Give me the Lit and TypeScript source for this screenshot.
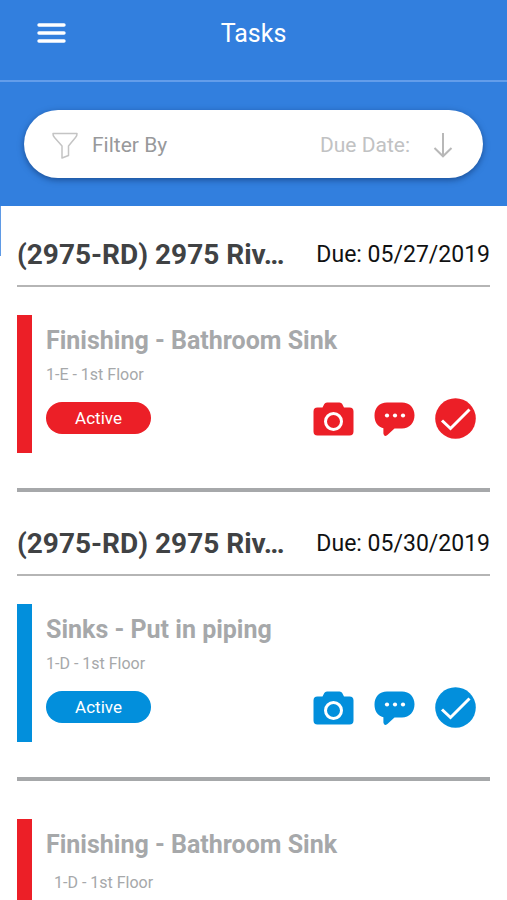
import { LitElement, html, css, svg, nothing } from "lit";
import { customElement, property } from "lit/decorators.js";
import { classMap } from "lit/directives/class-map.js";

type Tone = "red" | "blue";

interface Task {
  project?: string;
  due?: string;
  title: string;
  place: string;
  tone: Tone;
  indented?: boolean;
}

const tasks: Task[] = [
  {
    project: "(2975-RD) 2975 Riv…",
    due: "05/27/2019",
    title: "Finishing - Bathroom Sink",
    place: "1-E - 1st Floor",
    tone: "red",
  },
  {
    project: "(2975-RD) 2975 Riv…",
    due: "05/30/2019",
    title: "Sinks - Put in piping",
    place: "1-D - 1st Floor",
    tone: "blue",
  },
  {
    title: "Finishing - Bathroom Sink",
    place: "1-D - 1st Floor",
    tone: "red",
    indented: true,
  },
];

const camera = svg`
  <path fill="currentColor" d="M4.500 9.500H9.500L11.300 6.100Q12 4.500 14 4.500H26.500Q28.500 4.500 29.200 6.100L31 9.500H36.500Q40.500 9.500 40.500 13.500V33.500Q40.500 37.500 36.500 37.500H4.500Q.5 37.500 .5 33.500V13.500Q.5 9.500 4.500 9.500Z"/>
  <circle cx="20.500" cy="23.500" r="8" fill="none" stroke="#fff" stroke-width="3"/>`;

const chat = svg`
  <path fill="currentColor" d="M13 4.500H28C35.500 4.500 40.500 9.800 40.500 17.300S35.500 30.500 28 30.500H20.500L13.400 37Q10 39.500 9.400 35.500V30.200C3.500 29 .5 23.800.5 17.500.5 9.800 5.500 4.500 13 4.500Z"/>
  <g fill="#fff"><circle cx="13" cy="17.500" r="2.100"/><circle cx="21" cy="17.500" r="2.100"/><circle cx="29" cy="17.500" r="2.100"/></g>`;

const check = svg`
  <circle cx="20.500" cy="20.500" r="20.300" fill="currentColor"/>
  <path d="M7 22.500L15.500 30.500L34.500 11.500" fill="none" stroke="#fff" stroke-width="3"/>`;

@customElement("task-card")
export class TaskCard extends LitElement {
  @property({ attribute: false }) task!: Task;

  static styles = css`
    :host {
      display: block;
    }
    h2,
    h3,
    p {
      margin: 0;
    }
    .group {
      display: flex;
      align-items: center;
      justify-content: space-between;
      height: 60px;
      padding-top: 4px;
      margin-bottom: 28px;
      border-bottom: 2px solid #b5b5b5;
    }
    .project {
      font-size: 28px;
      line-height: 32px;
      font-weight: 700;
      color: #404244;
      white-space: nowrap;
    }
    .due {
      font-size: 23px;
      line-height: 32px;
      color: #101112;
      white-space: nowrap;
    }
    .card {
      display: flex;
      flex-direction: column;
      min-height: 138px;
      box-sizing: border-box;
      padding: 10px 14px 18px;
      border-left: 15px solid var(--tone);
    }
    .red {
      --tone: #ec1f27;
    }
    .blue {
      --tone: #028fdc;
    }
    .title {
      font-size: 25px;
      line-height: 32px;
      font-weight: 700;
      color: #a6a8aa;
    }
    .place {
      margin-top: 8px;
      font-size: 16px;
      line-height: 20px;
      color: #a6a8aa;
    }
    .indented .place {
      margin: 12px 0 0 8px;
    }
    .row {
      display: flex;
      align-items: center;
      justify-content: space-between;
      margin-top: 17px;
    }
    .status {
      width: 105px;
      border-radius: 16px;
      background: var(--tone);
      color: #fff;
      font-size: 17px;
      line-height: 32px;
      text-align: center;
    }
    .actions {
      display: flex;
      gap: 20px;
      height: 32px;
      align-items: center;
    }
    .action {
      padding: 0;
      border: 0;
      background: none;
      color: var(--tone);
      cursor: pointer;
    }
    .icon {
      display: block;
      width: 41px;
      height: 41px;
    }
  `;

  private action(label: string, shape: unknown) {
    return html`<button class="action" type="button" aria-label=${label}>
      <svg class="icon" viewBox="0 0 41 41" aria-hidden="true">${shape}</svg>
    </button>`;
  }

  render() {
    const t = this.task;
    return html`
      ${t.project
        ? html`<header class="group">
            <h2 class="project">${t.project}</h2>
            <span class="due">Due: ${t.due}</span>
          </header>`
        : nothing}
      <article class=${classMap({ card: true, [t.tone]: true, indented: !!t.indented })}>
        <h3 class="title">${t.title}</h3>
        <p class="place">${t.place}</p>
        <div class="row">
          <span class="status">Active</span>
          <div class="actions">
            ${this.action("Add photo", camera)} ${this.action("Comments", chat)}
            ${this.action("Complete", check)}
          </div>
        </div>
      </article>
    `;
  }
}

@customElement("app-root")
export class AppRoot extends LitElement {
  static styles = css`
    :host {
      display: flex;
      flex-direction: column;
      height: 100vh;
      overflow: hidden;
      background: #fff;
      font-family: Roboto, "Liberation Sans", sans-serif;
    }
    .top {
      flex: none;
      position: relative;
      background: #327fde;
    }
    .edge {
      position: absolute;
      top: 100%;
      left: 0;
      width: 1px;
      height: 50px;
      background: #5f9ae5;
    }
    .bar {
      display: grid;
      grid-template-columns: 1fr auto 1fr;
      align-items: center;
      height: 68px;
      padding: 0 37px 12px;
      border-bottom: 2px solid #639dea;
    }
    .menu {
      justify-self: start;
      margin-bottom: 2px;
      padding: 0;
      border: 0;
      background: none;
      color: #fff;
      cursor: pointer;
    }
    .menu-icon {
      display: block;
      width: 29px;
      height: 20px;
    }
    .heading {
      margin: 0;
      font-size: 25px;
      line-height: 32px;
      font-weight: 400;
      color: #fff;
    }
    .filters {
      padding: 28px 24px;
    }
    .pill {
      display: flex;
      align-items: center;
      justify-content: space-between;
      height: 68px;
      box-sizing: border-box;
      padding: 2px 30px 0 28px;
      border-radius: 34px;
      background: #fff;
      box-shadow: 0 2px 6px rgba(10, 40, 90, 0.55);
    }
    .option {
      display: flex;
      align-items: center;
      padding: 0;
      border: 0;
      background: none;
      font: inherit;
      font-size: 21px;
      line-height: 28px;
      cursor: pointer;
    }
    .filter {
      gap: 14px;
      color: #98999b;
    }
    .sort {
      gap: 23px;
      color: #c1c2c3;
    }
    .funnel {
      width: 26px;
      height: 27px;
    }
    .arrow {
      width: 20px;
      height: 26px;
    }
    .list {
      flex: 1;
      min-height: 0;
      overflow-y: auto;
      scrollbar-width: none;
      padding: 15px 17px 0;
    }
    .rule {
      height: 4px;
      margin: 35px 0 18px;
      border: 0;
      background: #a6a8aa;
    }
    .loose {
      margin-bottom: 38px;
    }
  `;

  render() {
    return html`
      <header class="top">
        <div class="bar">
          <button class="menu" type="button" aria-label="Menu">
            <svg class="menu-icon" viewBox="0 0 29 20" aria-hidden="true">
              <path d="M2 2H27M2 10H27M2 18H27" stroke="currentColor" stroke-width="3.400" stroke-linecap="round" />
            </svg>
          </button>
          <h1 class="heading">Tasks</h1>
        </div>
        <div class="filters">
          <div class="pill">
            <button class="option filter" type="button">
              <svg class="funnel" viewBox="0 0 26 27" fill="none" stroke="#c4c4c4" stroke-width="1.500" stroke-linejoin="round" aria-hidden="true">
                <path d="M1 1.500H25Q25.200 3.500 23.500 5.500L16.500 14V23.500L10 26V14L2.500 5.500Q.8 3.500 1 1.500Z" />
              </svg>
              Filter By
            </button>
            <button class="option sort" type="button">
              Due Date:
              <svg class="arrow" viewBox="0 0 20 26" fill="none" stroke="#b8b8b8" stroke-width="2" aria-hidden="true">
                <path d="M10 1V24M1.500 16L10 24.300L18.500 16" />
              </svg>
            </button>
          </div>
        </div>
        <span class="edge"></span>
      </header>
      <main class="list">
        ${tasks.map(
          (t, i) => html`
            ${i > 0 ? html`<hr class=${classMap({ rule: true, loose: !t.project })} />` : nothing}
            <task-card .task=${t}></task-card>
          `,
        )}
      </main>
    `;
  }
}
